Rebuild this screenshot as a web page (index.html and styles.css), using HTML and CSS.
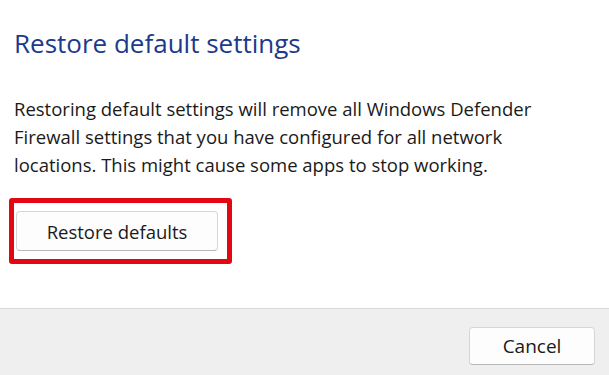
FILE: index.html
```html
<!DOCTYPE html>
<html>
<head>
<meta charset="utf-8">
<link rel="stylesheet" href="styles.css">
</head>
<body>
<div class="dialog">
  <main class="content">
    <h1 class="title">Restore default settings</h1>
    <p class="desc">Restoring default settings will remove all Windows Defender Firewall settings that you have configured for all network locations. This might cause some apps to stop working.</p>
    <div class="highlight">
      <button class="btn btn-restore">Restore defaults</button>
    </div>
  </main>
  <footer class="footer">
    <button class="btn btn-cancel">Cancel</button>
  </footer>
</div>
</body>
</html>
```
FILE: styles.css
```css
html, body {
  margin: 0;
  padding: 0;
  background: #ffffff;
}
.dialog {
  width: 609px;
  height: 375px;
  display: flex;
  flex-direction: column;
  font-family: "Open Sans", "Noto Sans", sans-serif;
}
.content {
  flex: 1;
  background: #ffffff;
  padding: 0 0 0 14px;
}
.title {
  margin: 27px 0 0 0;
  font-size: 26px;
  font-weight: 400;
  line-height: 32px;
  color: #1b3a8c;
}
.desc {
  margin: 36px 0 0 0;
  width: 530px;
  font-size: 18.5px;
  line-height: 28px;
  color: #1a1a1a;
}
.highlight {
  margin: 19px 0 0 -5px;
  width: 211px;
  height: 56px;
  border: 5px solid #e30613;
  border-radius: 3px;
  display: flex;
  align-items: center;
  padding-left: 2px;
}
.btn {
  font-family: "Open Sans", "Noto Sans", sans-serif;
  font-size: 18.5px;
  color: #1a1a1a;
  background: #fdfdfd;
  border: 1px solid #d6d6d6;
  border-bottom-color: #b8b8b8;
  border-radius: 4px;
  padding: 0;
}
.btn-restore {
  width: 202px;
  height: 40px;
}
.footer {
  height: 67px;
  border-top: 1px solid #d9d9d9;
  background: #efefef;
  display: flex;
  justify-content: flex-end;
  align-items: flex-start;
  padding: 18px 14px 0 0;
  box-sizing: border-box;
}
.btn-cancel {
  width: 126px;
  height: 38px;
  font-size: 19px;
}
```
